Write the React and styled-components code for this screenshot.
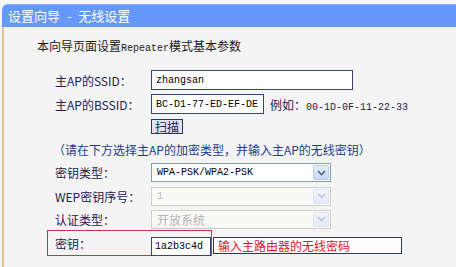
import React from 'react';
import styled, { createGlobalStyle } from 'styled-components';

const GlobalStyle = createGlobalStyle`
  html, body {
    margin: 0;
    padding: 0;
    background: #f4f4f4;
  }
`;

const cjk = `"Noto Sans CJK SC", "Noto Sans", sans-serif`;
const mono = `"Liberation Mono", "Noto Sans CJK SC", monospace`;

const Page = styled.div`
  width: 456px;
  height: 267px;
  background: #f4f4f4;
  font-family: ${cjk};
  font-size: 12px;
  overflow: hidden;
  display: flex;
  flex-direction: column;
`;

const TopStrip = styled.div`
  height: 4px;
  background: #f7f7f7;
  flex: none;
`;

const TitleBar = styled.div`
  height: 23px;
  margin-left: 2px;
  background: #6598fb;
  border-top: 1px solid #86aefc;
  box-sizing: border-box;
  border-top-left-radius: 6px;
  color: #fff;
  font-size: 13px;
  line-height: 21px;
  padding-left: 6px;
  flex: none;
  word-spacing: 4px;
`;

const Body = styled.div`
  flex: 1;
  margin-left: 2px;
  border-left: 2px solid #dcbf92;
  display: flex;
  flex-direction: column;
`;

const Heading = styled.div`
  margin: 10px 0 10px 33px;
  line-height: 18px;
  color: #1a1a1a;
  white-space: nowrap;
`;

const Latin = styled.span`
  font-family: "Liberation Mono", monospace;
  font-size: 10px;
`;

const Form = styled.div`
  padding-left: 51px;
  display: flex;
  flex-direction: column;
`;

const Row = styled.div`
  height: ${({ h }) => h}px;
  display: flex;
  align-items: center;
  white-space: nowrap;
`;

const Label = styled.div`
  width: 96px;
  flex: none;
  color: #1c2352;
`;

const TextInput = styled.div`
  width: ${({ w }) => w}px;
  height: ${({ ht }) => ht || 20}px;
  box-sizing: border-box;
  border: 1px solid #33456f;
  background: #fff;
  font-family: ${mono};
  font-size: 10px;
  color: #000;
  display: flex;
  align-items: center;
  padding-left: 4px;
  flex: none;
`;

const Example = styled.span`
  margin-left: 6px;
  font-family: ${mono};
  font-size: 10px;
  color: #1c2352;
  & b {
    font-family: ${cjk};
    font-size: 12px;
    font-weight: normal;
  }
`;

const ScanButton = styled.div`
  width: 32px;
  height: 15px;
  box-sizing: border-box;
  border: 1px solid #2b3566;
  background: #dfe2f1;
  color: #1c2352;
  display: flex;
  align-items: center;
  justify-content: center;
  line-height: 13px;
`;

const Note = styled.div`
  margin-left: -2px;
  color: #1b3c8c;
`;

const Select = styled.div`
  width: 180px;
  height: 19px;
  box-sizing: border-box;
  border: 1px solid ${({ disabled }) => (disabled ? '#cfcfc6' : '#7f9db9')};
  background: ${({ disabled }) => (disabled ? '#f9f9f7' : '#fff')};
  display: flex;
  align-items: stretch;
  flex: none;
`;

const SelectText = styled.div`
  flex: 1;
  display: flex;
  align-items: center;
  padding-left: 5px;
  font-family: ${mono};
  font-size: 10px;
  color: ${({ disabled }) => (disabled ? '#b4b4b4' : '#000')};
  & b {
    font-family: ${cjk};
    font-size: 12px;
    font-weight: normal;
  }
`;

const Arrow = styled.div`
  width: 16px;
  margin: 1px;
  box-sizing: border-box;
  border: 1px solid ${({ disabled }) => (disabled ? '#dde6f3' : '#b5c8e8')};
  background: ${({ disabled }) =>
    disabled ? 'linear-gradient(#f0f4fb, #e4ebf6)' : 'linear-gradient(#e6eefc, #c6d6f4)'};
  border-radius: 2px;
  display: flex;
  align-items: center;
  justify-content: center;
`;

const KeyBox = styled.div`
  margin-left: -8px;
  width: 165px;
  height: 26px;
  box-sizing: border-box;
  border: 1px solid #c9334c;
  padding-left: 7px;
  display: flex;
  align-items: center;
  flex: none;
`;

const KeyInput = styled(TextInput)`
  align-self: flex-end;
  margin-bottom: -1px;
  padding-left: 3px;
`;

const Hint = styled.div`
  margin-left: 1px;
  width: 189px;
  height: 17px;
  box-sizing: border-box;
  border: 1px solid #2b3566;
  background: #fff;
  color: #e0142e;
  padding-left: 4px;
  line-height: 15px;
  align-self: flex-end;
  margin-bottom: 2px;
`;

const Chevron = ({ disabled }) => (
  <svg width="9" height="6" viewBox="0 0 9 6">
    <path
      d="M1 1 L4.5 4.5 L8 1"
      fill="none"
      stroke={disabled ? '#b9c6dc' : '#4d6185'}
      strokeWidth="1.6"
    />
  </svg>
);

const Dropdown = ({ children, disabled }) => (
  <Select disabled={disabled}>
    <SelectText disabled={disabled}>{children}</SelectText>
    <Arrow disabled={disabled}>
      <Chevron disabled={disabled} />
    </Arrow>
  </Select>
);

export default function App() {
  return (
    <>
      <GlobalStyle />
      <Page>
        <TopStrip />
        <TitleBar>设置向导 - 无线设置</TitleBar>
        <Body>
          <Heading>
            本向导页面设置<Latin>Repeater</Latin>模式基本参数
          </Heading>
          <Form>
            <Row h={24}>
              <Label>主AP的SSID：</Label>
              <TextInput w={202}>zhangsan</TextInput>
            </Row>
            <Row h={24}>
              <Label>主AP的BSSID：</Label>
              <TextInput w={113}>BC-D1-77-ED-EF-DE</TextInput>
              <Example>
                <b>例如：</b>00-1D-0F-11-22-33
              </Example>
            </Row>
            <Row h={21}>
              <Label />
              <ScanButton>扫描</ScanButton>
            </Row>
            <Row h={24}>
              <Note>（请在下方选择主AP的加密类型，并输入主AP的无线密钥）</Note>
            </Row>
            <Row h={23}>
              <Label>密钥类型：</Label>
              <Dropdown>WPA-PSK/WPA2-PSK</Dropdown>
            </Row>
            <Row h={24}>
              <Label>WEP密钥序号：</Label>
              <Dropdown disabled>1</Dropdown>
            </Row>
            <Row h={22}>
              <Label>认证类型：</Label>
              <Dropdown disabled>
                <b>开放系统</b>
              </Dropdown>
            </Row>
            <Row h={26}>
              <KeyBox>
                <Label>密钥：</Label>
                <KeyInput w={60} ht={19}>1a2b3c4d</KeyInput>
              </KeyBox>
              <Hint>输入主路由器的无线密码</Hint>
            </Row>
          </Form>
        </Body>
      </Page>
    </>
  );
}
